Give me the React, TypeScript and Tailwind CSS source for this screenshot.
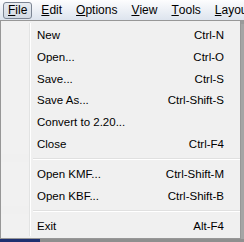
import React from "react";

type Item = { label: string; shortcut?: string } | "sep";

const ITEMS: Item[] = [
  { label: "New", shortcut: "Ctrl-N" },
  { label: "Open...", shortcut: "Ctrl-O" },
  { label: "Save...", shortcut: "Ctrl-S" },
  { label: "Save As...", shortcut: "Ctrl-Shift-S" },
  { label: "Convert to 2.20..." },
  { label: "Close", shortcut: "Ctrl-F4" },
  "sep",
  { label: "Open KMF...", shortcut: "Ctrl-Shift-M" },
  { label: "Open KBF...", shortcut: "Ctrl-Shift-B" },
  "sep",
  { label: "Exit", shortcut: "Alt-F4" },
];

const MENUS = ["File", "Edit", "Options", "View", "Tools", "Layout"];

const App: React.FC = () => {
  return (
    <div
      className="w-[244px] h-[242px] overflow-hidden bg-[#9a9a9a] text-black flex flex-col"
      style={{ fontFamily: '"Liberation Sans", Arial, sans-serif' }}
    >
      {/* menu bar */}
      <div className="h-[20px] shrink-0 flex items-center gap-[4px] pl-[3px] bg-gradient-to-b from-[#fdfdfe] to-[#dde4ee] text-[12px] whitespace-nowrap">
        {MENUS.map((m, i) => (
          <div
            key={m}
            className={
              i === 0
                ? "h-[17px] flex items-center px-[4px] rounded-[3px] border border-[#7c8593] bg-gradient-to-b from-[#e8ecf1] to-[#d3dae4]"
                : "h-[17px] flex items-center px-[5px]"
            }
          >
            <span className="underline underline-offset-[1px]">{m[0]}</span>
            {m.slice(1)}
          </div>
        ))}
      </div>

      {/* dropdown + shadow */}
      <div className="flex flex-1">
        <div className="w-[241px] h-[219px] border border-[#979797] bg-[#f0f0f0] flex flex-col py-[2px] text-[11.5px]">
          {ITEMS.map((it, i) =>
            it === "sep" ? (
              <div key={i} className="h-[8px] flex">
                <div className="w-[29px] shrink-0 border-r border-[#e2e3e3]" />
                <div className="w-px bg-white" />
                <div className="flex-1 flex items-center pl-[2px] pt-[1px]">
                  <div className="w-full border-t border-[#e0e0e0] border-b border-b-white" />
                </div>
              </div>
            ) : (
              <div key={i} className="h-[22px] flex items-center">
                <div className="w-[29px] h-full shrink-0 bg-[#f1f1f1] border-r border-[#e2e3e3]" />
                <div className="w-px h-full bg-white" />
                <div className="flex-1 flex items-center justify-between pl-[6px] pr-[16px] pt-[3px] whitespace-nowrap">
                  <span>{it.label}</span>
                  {it.shortcut && <span>{it.shortcut}</span>}
                </div>
              </div>
            )
          )}
        </div>
        <div className="w-[3px] mt-[4px] bg-[#a5a5a5]" />
      </div>

      {/* desktop strip behind */}
      <div className="h-[3px] shrink-0 flex">
        <div className="w-[40px] bg-[#1e3070]" />
        <div className="flex-1 bg-[#8f8f8f]" />
      </div>
    </div>
  );
};

export default App;
